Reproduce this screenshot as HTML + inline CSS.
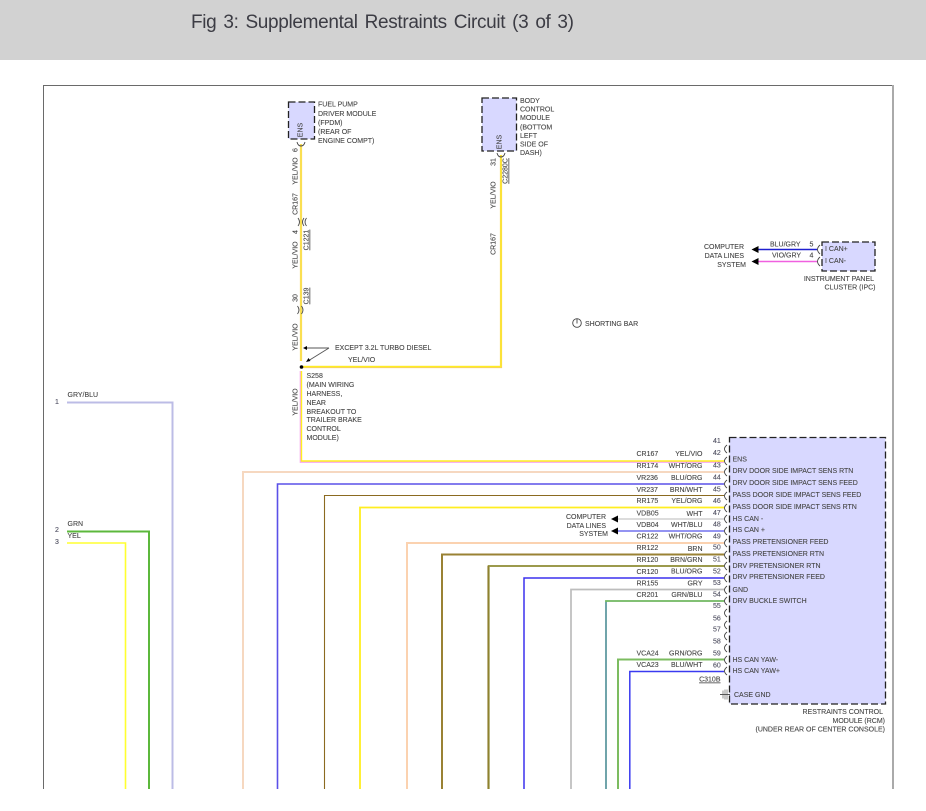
<!DOCTYPE html>
<html>
<head>
<meta charset="utf-8">
<title>Fig 3: Supplemental Restraints Circuit (3 of 3)</title>
<style>
html,body{margin:0;padding:0;background:#fff;width:926px;height:811px;overflow:hidden}
svg{display:block;position:absolute;left:0;top:0}
text{font-family:"Liberation Sans",sans-serif;font-size:7px;fill:#444;stroke:#555;stroke-width:.12}
.e{text-anchor:end}
.n{fill:#50506a}
path,line,rect.w{fill:none}
.arc{fill:none;stroke:#444;stroke-width:.9}
</style>
</head>
<body>
<svg width="926" height="811" viewBox="0 0 926 811" xmlns="http://www.w3.org/2000/svg">
<rect x="0" y="0" width="926" height="60" fill="#d2d2d2"/>
<text x="191" y="28" textLength="383" lengthAdjust="spacing" style="font-size:19px;fill:#3c3c44;stroke:none;word-spacing:2px">Fig 3: Supplemental Restraints Circuit (3 of 3)</text>

<!-- frame -->
<path d="M43.5 789V85.5H893V789" stroke="#6a6a6a" stroke-width="1"/>
<line x1="893" y1="85" x2="893" y2="789" stroke="#aaa" stroke-width="2"/>

<!-- modules -->
<rect x="288.5" y="102" width="26" height="37" fill="#d8d8ff" stroke="#222" stroke-width="1.3" stroke-dasharray="7 3"/>
<rect x="482" y="98" width="34.5" height="53" fill="#d8d8ff" stroke="#222" stroke-width="1.3" stroke-dasharray="7 3"/>
<rect x="822" y="242" width="53" height="29" fill="#d8d8ff" stroke="#222" stroke-width="1.3" stroke-dasharray="7 3"/>
<rect x="729.5" y="437.5" width="156" height="266.5" fill="#d8d8ff" stroke="#222" stroke-width="1.3" stroke-dasharray="7 3"/>

<!-- left wires -->
<path d="M67 402.5H172.5V789" stroke="#bcbce6" stroke-width="2"/>
<path d="M67 531.5H149V789" stroke="#5cb83c" stroke-width="2"/>
<path d="M67 543H125.5V789" stroke="#ffff30" stroke-width="1.6"/>

<!-- top wires -->
<line x1="301" y1="144" x2="301" y2="361" stroke="#f5d060" stroke-width="2.2"/>
<line x1="301" y1="144" x2="301" y2="361" stroke="#ffee44" stroke-width="1"/>
<path d="M501 155V367H303" stroke="#f5d060" stroke-width="2.2"/>
<path d="M501 155V366.5H303" stroke="#ffee20" stroke-width="1.2"/>
<path d="M300.800 371V461.800H724" stroke="#f7a8f0" stroke-width="2.200"/>
<path d="M301.500 371V461H724" stroke="#fff020" stroke-width="1.400"/>
<circle cx="301.500" cy="367" r="1.800" fill="#000"/>

<!-- harness wires -->
<path d="M243 789V472H724" stroke="#f6d8c0" stroke-width="2"/>
<path d="M277.5 789V484H724" stroke="#5a50e8" stroke-width="1.6"/>
<path d="M324.5 789V495.5H724" stroke="#8b6a20" stroke-width="1.1"/>
<path d="M360 789V507.5H724" stroke="#ffee20" stroke-width="1.8"/>
<path d="M407 789V543H724" stroke="#fbd2b0" stroke-width="2"/>
<path d="M442 789V554.5H724" stroke="#9a8234" stroke-width="2"/>
<path d="M488.7 789V566H724" stroke="#9c9a4c" stroke-width="2"/>
<path d="M488 789V566" stroke="#7f6a10" stroke-width="1"/>
<path d="M524 789V578H724" stroke="#3c30ee" stroke-width="1.5"/>
<path d="M571 789V589.5H724" stroke="#bdbdbd" stroke-width="1.7"/>
<path d="M606 789V601H724" stroke="#70b860" stroke-width="1.8"/>
<path d="M606 789V602" stroke="#5f8fc8" stroke-width="1.2"/>
<path d="M618 789V659.5H724" stroke="#7cbc60" stroke-width="2"/>
<path d="M629.8 789V671.5H724" stroke="#3a3af0" stroke-width="1.5"/>
<line x1="615" y1="519" x2="724" y2="519" stroke="#d0d0d0" stroke-width="1.5"/>
<line x1="615" y1="531" x2="724" y2="531" stroke="#7070ee" stroke-width="1.4"/>

<!-- IPC wires -->
<line x1="756" y1="249.5" x2="817" y2="249.5" stroke="#2020d0" stroke-width="1.4"/>
<line x1="756" y1="261.5" x2="817" y2="261.5" stroke="#f060e0" stroke-width="1.6"/>
<path d="M751.5 249.5l7-3.500v7zM751.500 261.500l7-3.500v7z" style="fill:#000"/>
<path d="M611 519l7-3.500v7zM611 531l7-3.500v7z" style="fill:#000"/>
<path class="arc" d="M820 245Q815 249.500 820 254M820 257Q815 261.500 820 266"/>

<!-- connector arcs on RCM -->
<path class="arc" d="M727 445Q722 449 727 453M727 457Q722 461 727 465M727 468Q722 472 727 476M727 480Q722 484 727 488M727 492Q722 496 727 500M727 504Q722 508 727 512M727 515Q722 519 727 523M727 527Q722 531 727 535M727 539Q722 543 727 547M727 551Q722 555 727 559M727 562Q722 566 727 570M727 574Q722 578 727 582M727 586Q722 590 727 594M727 597Q722 601 727 605M727 609Q722 613 727 617M727 621Q722 625 727 629M727 632Q722 636 727 640M727 644Q722 648 727 652M727 656Q722 660 727 664M727 667Q722 671 727 675"/>
<!-- case gnd -->
<path d="M723 690.500v8M725 689.500v10M727 689.500v10" stroke="#777" stroke-width=".8"/>
<path d="M720 694.500h10" stroke="#555" stroke-width="1"/>

<!-- small connector marks -->
<path class="arc" d="M297 142q1 4 4 4t4-4M497 153q1 4 4 4t4-4M298 218q3 4 0 8M304 218q-3 4 0 8M306.500 218q-3 4 0 8M297.500 306q3 4 0 8M301.500 306q3 4 0 8"/>

<!-- except arrows -->
<path d="M329 348H305M329 348L308 361" stroke="#555" stroke-width=".9"/>
<path d="M303 348l4-2v4zM306 362l2.500-4 2 3z" style="fill:#000"/>

<!-- shorting bar -->
<circle cx="577" cy="323" r="4.300" fill="none" stroke="#444" stroke-width=".9"/>
<line x1="577" y1="319" x2="577" y2="323.500" stroke="#444" stroke-width=".9"/>
<text x="585" y="326">SHORTING BAR</text>

<!-- FPDM text -->
<text x="318" y="106.500">FUEL PUMP</text>
<text x="318" y="116">DRIVER MODULE</text>
<text x="318" y="125">(FPDM)</text>
<text x="318" y="134">(REAR OF</text>
<text x="318" y="143">ENGINE COMPT)</text>

<!-- BCM text -->
<text x="520" y="103">BODY</text>
<text x="520" y="111.500">CONTROL</text>
<text x="520" y="120">MODULE</text>
<text x="520" y="129.500">(BOTTOM</text>
<text x="520" y="138">LEFT</text>
<text x="520" y="146.500">SIDE OF</text>
<text x="520" y="155">DASH)</text>

<!-- rotated -->
<g text-anchor="middle">
<text transform="translate(302.500,130) rotate(-90)">ENS</text>
<text transform="translate(501.500,142) rotate(-90)">ENS</text>
<text transform="translate(297.500,150) rotate(-90)">6</text>
<text transform="translate(297.500,171) rotate(-90)">YEL/VIO</text>
<text transform="translate(297.500,204) rotate(-90)">CR167</text>
<text transform="translate(297.500,232) rotate(-90)">4</text>
<text transform="translate(297.500,255) rotate(-90)">YEL/VIO</text>
<text transform="translate(297.500,298) rotate(-90)">30</text>
<text transform="translate(297.500,337) rotate(-90)">YEL/VIO</text>
<text transform="translate(297.500,402) rotate(-90)">YEL/VIO</text>
<text transform="translate(308.500,240) rotate(-90)" text-decoration="underline">C1221</text>
<text transform="translate(308.500,296) rotate(-90)" text-decoration="underline">C139</text>
<text transform="translate(495.500,162) rotate(-90)">31</text>
<text transform="translate(495.500,195) rotate(-90)">YEL/VIO</text>
<text transform="translate(495.500,244) rotate(-90)">CR167</text>
<text transform="translate(507.500,171) rotate(-90)" text-decoration="underline">C2280C</text>
</g>

<text x="335" y="350">EXCEPT 3.2L TURBO DIESEL</text>
<text x="348" y="362">YEL/VIO</text>
<text x="306.500" y="378">S258</text>
<text x="306.500" y="387">(MAIN WIRING</text>
<text x="306.500" y="396">HARNESS,</text>
<text x="306.500" y="405">NEAR</text>
<text x="306.500" y="414">BREAKOUT TO</text>
<text x="306.500" y="422">TRAILER BRAKE</text>
<text x="306.500" y="431">CONTROL</text>
<text x="306.500" y="440">MODULE)</text>

<!-- IPC text -->
<text class="e" x="744" y="249">COMPUTER</text>
<text class="e" x="744" y="258">DATA LINES</text>
<text class="e" x="746" y="267">SYSTEM</text>
<text x="770" y="246.500">BLU/GRY</text>
<text x="772" y="257.500">VIO/GRY</text>
<text x="809.500" y="246.500">5</text>
<text x="809.500" y="257.500">4</text>
<text x="825" y="251">I CAN+</text>
<text x="825" y="263">I CAN-</text>
<text class="e" x="874" y="281">INSTRUMENT PANEL</text>
<text class="e" x="875.500" y="289.500">CLUSTER (IPC)</text>

<!-- left labels -->
<text class="n" x="55" y="404">1</text>
<text x="67.500" y="397">GRY/BLU</text>
<text x="67.500" y="526">GRN</text>
<text class="n" x="55" y="532">2</text>
<text x="67.500" y="538">YEL</text>
<text class="n" x="55" y="544">3</text>

<!-- computer lines 2 -->
<text class="e" x="606" y="519">COMPUTER</text>
<text class="e" x="606" y="528">DATA LINES</text>
<text class="e" x="608" y="536">SYSTEM</text>

<!-- wire names -->
<text x="636.500" y="456">CR167</text><text class="e" x="702.500" y="456">YEL/VIO</text>
<text x="636.500" y="468">RR174</text><text class="e" x="702.500" y="468">WHT/ORG</text>
<text x="636.500" y="480">VR236</text><text class="e" x="702.500" y="480">BLU/ORG</text>
<text x="636.500" y="492">VR237</text><text class="e" x="702.500" y="492">BRN/WHT</text>
<text x="636.500" y="503">RR175</text><text class="e" x="702.500" y="503">YEL/ORG</text>
<text x="636.500" y="515.500">VDB05</text><text class="e" x="702.500" y="516">WHT</text>
<text x="636.500" y="527">VDB04</text><text class="e" x="702.500" y="527">WHT/BLU</text>
<text x="636.500" y="538.500">CR122</text><text class="e" x="702.500" y="538.500">WHT/ORG</text>
<text x="636.500" y="550">RR122</text><text class="e" x="702.500" y="551">BRN</text>
<text x="636.500" y="562">RR120</text><text class="e" x="702.500" y="562">BRN/GRN</text>
<text x="636.500" y="574">CR120</text><text class="e" x="702.500" y="573.500">BLU/ORG</text>
<text x="636.500" y="585.500">RR155</text><text class="e" x="702.500" y="585.500">GRY</text>
<text x="636.500" y="597">CR201</text><text class="e" x="702.500" y="597">GRN/BLU</text>
<text x="636.500" y="655.500">VCA24</text><text class="e" x="702.500" y="655.500">GRN/ORG</text>
<text x="636.500" y="667">VCA23</text><text class="e" x="702.500" y="667">BLU/WHT</text>
<text class="e" x="720.500" y="681.500" text-decoration="underline">C310B</text>

<!-- pins -->
<g class="pins">
<text class="n" x="713" y="443">41</text>
<text class="n" x="713" y="455">42</text>
<text class="n" x="713" y="467.500">43</text>
<text class="n" x="713" y="479.500">44</text>
<text class="n" x="713" y="491.500">45</text>
<text class="n" x="713" y="503">46</text>
<text class="n" x="713" y="515">47</text>
<text class="n" x="713" y="526.500">48</text>
<text class="n" x="713" y="538.500">49</text>
<text class="n" x="713" y="549.500">50</text>
<text class="n" x="713" y="561.500">51</text>
<text class="n" x="713" y="573.500">52</text>
<text class="n" x="713" y="585">53</text>
<text class="n" x="713" y="596.500">54</text>
<text class="n" x="713" y="608">55</text>
<text class="n" x="713" y="620.500">56</text>
<text class="n" x="713" y="631.500">57</text>
<text class="n" x="713" y="643.500">58</text>
<text class="n" x="713" y="655.500">59</text>
<text class="n" x="713" y="667.500">60</text>
</g>

<!-- RCM labels -->
<text x="732.500" y="461.500">ENS</text>
<text x="732.500" y="473">DRV DOOR SIDE IMPACT SENS RTN</text>
<text x="732.500" y="485">DRV DOOR SIDE IMPACT SENS FEED</text>
<text x="732.500" y="497">PASS DOOR SIDE IMPACT SENS FEED</text>
<text x="732.500" y="509">PASS DOOR SIDE IMPACT SENS RTN</text>
<text x="732.500" y="521">HS CAN -</text>
<text x="732.500" y="532">HS CAN +</text>
<text x="732.500" y="544">PASS PRETENSIONER FEED</text>
<text x="732.500" y="556">PASS PRETENSIONER RTN</text>
<text x="732.500" y="568">DRV PRETENSIONER RTN</text>
<text x="732.500" y="579">DRV PRETENSIONER FEED</text>
<text x="732.500" y="592">GND</text>
<text x="732.500" y="603">DRV BUCKLE SWITCH</text>
<text x="732.500" y="662">HS CAN YAW-</text>
<text x="732.500" y="673">HS CAN YAW+</text>
<text x="734" y="697">CASE GND</text>
<text class="e" x="883" y="714">RESTRAINTS CONTROL</text>
<text class="e" x="885" y="723">MODULE (RCM)</text>
<text class="e" x="885" y="731.500">(UNDER REAR OF CENTER CONSOLE)</text>
</svg>
</body>
</html>
